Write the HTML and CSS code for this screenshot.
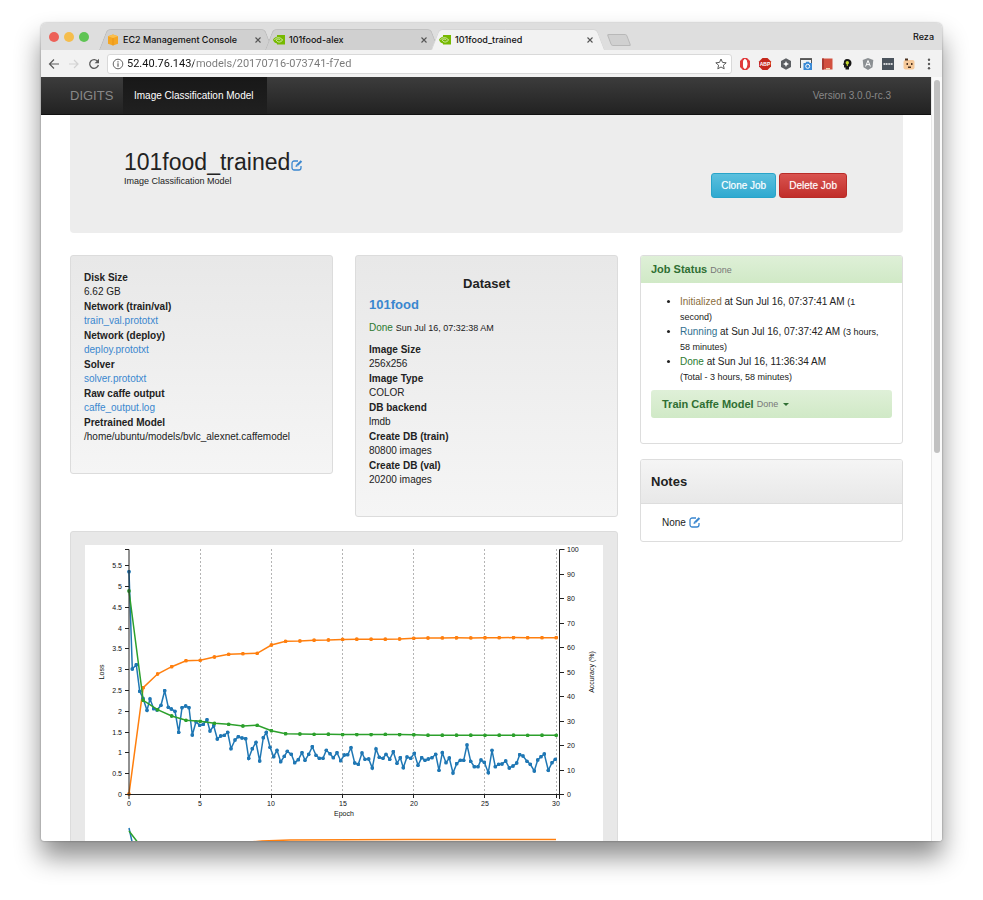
FILE: index.html
```html
<!DOCTYPE html>
<html lang="en">
<head>
<meta charset="utf-8">
<meta name="viewport" content="width=device-width, initial-scale=1">
<title>101food_trained</title>
<link rel="stylesheet" href="styles.css">
</head>
<body>
<svg class="defs" width="0" height="0" aria-hidden="true">
  <symbol id="eye" viewBox="0 0 12 10">
    <path d="M4 0h8v9.500H4V8.500C2 8 .5 6.500 0 4.700 1 3 2.500 2 4 1.800z" fill="#76b900"/>
    <path d="M1.500 4.800C3.500 2 7.500 2 9.600 5 8 7.300 5 8 3.200 5.200 4.600 3.600 6.500 4 7.300 5.200" fill="none" stroke="#e6f2cf" stroke-width=".8"/>
  </symbol>
  <symbol id="edit" viewBox="0 0 12 12">
    <path d="M7 2H3.200A2.200 2.200 0 0 0 1 4.200v4.600A2.200 2.200 0 0 0 3.200 11h4.600A2.200 2.200 0 0 0 10 8.800V7" fill="none" stroke="currentColor" stroke-width="1.300"/>
    <path d="M4.500 8l.4-2L9.700 1.200l1.500 1.500-4.800 4.800z" fill="currentColor"/>
    <path d="M5.700 6l.9.9" stroke="#fff" stroke-width=".7"/>
  </symbol>
  <symbol id="close" viewBox="0 0 8 8"><path d="M1.500 1.500l5 5M6.500 1.500l-5 5" stroke="#555" stroke-width="1.100"/></symbol>
</svg>

<div class="window">
  <header class="tabstrip">
    <div class="lights"><i class="close-light"></i><i class="minimize-light"></i><i class="zoom-light"></i></div>
    <nav class="tabs">
      <div class="tab">
        <svg class="favicon" viewBox="0 0 12 12"><path d="M6 .5l5 1.800v7.400L6 11.500 1 9.700V2.300z" fill="#f5a623"/><path d="M6 .5l5 1.800L6 4 1 2.300z" fill="#fbbf4c"/><path d="M6 4v7.500" stroke="#e08b12" stroke-width=".6"/></svg>
        <a href="#">EC2 Management Console</a>
        <button type="button" aria-label="Close tab"><svg><use href="#close"/></svg></button>
      </div>
      <div class="tab">
        <svg class="favicon"><use href="#eye"/></svg>
        <a href="#">101food-alex</a>
        <button type="button" aria-label="Close tab"><svg><use href="#close"/></svg></button>
      </div>
      <div class="tab active">
        <svg class="favicon"><use href="#eye"/></svg>
        <a href="#">101food_trained</a>
        <button type="button" aria-label="Close tab"><svg><use href="#close"/></svg></button>
      </div>
      <button type="button" class="newtab" aria-label="New tab"></button>
    </nav>
    <span class="profile">Reza</span>
  </header>

  <div class="toolbar">
    <div class="history">
      <button type="button" aria-label="Back"><svg viewBox="0 0 12 12"><path d="M11 6H1.500M6 1.500L1.500 6 6 10.500" fill="none" stroke="#5a5a5a" stroke-width="1.200"/></svg></button>
      <button type="button" aria-label="Forward"><svg viewBox="0 0 12 12"><path d="M1 6h9M6 2l4 4-4 4" fill="none" stroke="#d2d2d2" stroke-width="1.200"/></svg></button>
      <button type="button" aria-label="Reload"><svg viewBox="0 0 12 12"><path d="M9.800 3.500A4.400 4.400 0 1 0 10.400 7" fill="none" stroke="#5a5a5a" stroke-width="1.300"/><path d="M11 .8v4.400H6.600z" fill="#5a5a5a"/></svg></button>
    </div>
    <div class="omnibox">
      <svg viewBox="0 0 12 12"><circle cx="6" cy="6" r="4.800" fill="none" stroke="#666" stroke-width="1"/><path d="M6 5.300v3.400M6 3.200v1.200" stroke="#666" stroke-width="1.200"/></svg>
      <input type="text" aria-label="Address" value="52.40.76.143/models/20170716-073741-f7ed">
      <svg viewBox="0 0 12 12"><path d="M6 1l1.500 3.400 3.700.4-2.800 2.400.8 3.600L6 9l-3.200 1.800.8-3.600L.8 4.800l3.700-.4z" fill="none" stroke="#5a5a5a" stroke-width="1"/></svg>
    </div>
    <div class="extensions">
      <svg viewBox="0 0 14 14"><path fill-rule="evenodd" d="M5 1h4l3 3v6l-3 3H5l-3-3V4zM7 2.300C5.400 2.300 5 5 5 7s.4 4.700 2 4.700S9.300 9 9.300 7 8.600 2.300 7 2.300z" fill="#e03a3c"/><path d="M7 2.300C5.400 2.300 5 5 5 7s.4 4.700 2 4.700S9.300 9 9.300 7 8.600 2.300 7 2.300z" fill="#fff"/></svg>
      <svg viewBox="0 0 14 14"><path d="M4.500 1h5L13 4.500v5L9.500 13h-5L1 9.500v-5z" fill="#c5281c"/><text x="7" y="9" class="abp">ABP</text></svg>
      <svg viewBox="0 0 14 14"><path d="M7 1.200l5 2.900v5.800l-5 2.900-5-2.900V4.100z" fill="#5c5f63"/><path d="M7 4l.9 2.100L10 7l-2.100.9L7 10l-.9-2.100L4 7l2.100-.9z" fill="#fff"/></svg>
      <svg viewBox="0 0 14 14"><path d="M1.500 11V1.800h11V6" fill="none" stroke="#555" stroke-width="1"/><path d="M1 1.300h12v1.700H1z" fill="#555"/><path d="M4.500 6h2l.8-1.200h2.600l.8 1.200H13v7H4.500z" fill="#3a8ad6"/><circle cx="8.700" cy="9.300" r="2" fill="none" stroke="#fff"/></svg>
      <svg viewBox="0 0 14 14"><path d="M2 1.500h10.500v11H2z" fill="#d2503f"/><path d="M2 1.500h2v11H2z" fill="#a83a30"/><path d="M6 11h4v1.500H6z" fill="#efd9b4"/></svg>
      <svg viewBox="0 0 14 14"><path d="M7 2c3 0 4.500 1.800 4.500 4S10 9.500 9 10v2.500H5.500V10.500H4V8L3 7.500 3.800 6C3.800 3.600 5 2 7 2z" fill="#161616"/><circle cx="7.300" cy="5.700" r="1.700" fill="#c6d92f"/><path d="M7.300 7v2" stroke="#c6d92f"/></svg>
      <svg viewBox="0 0 14 14"><path d="M7 1l5.300 1.900-.8 7.300L7 13l-4.500-2.800-.8-7.300z" fill="#8b8f92"/><path d="M4.600 9.500L7 3.500l2.400 6M5.500 7.600h3" fill="none" stroke="#fff" stroke-width="1"/></svg>
      <svg viewBox="0 0 14 14"><path d="M1 1h12v12H1z" fill="#4a535c"/><path d="M2.500 6.200h2v1.600h-2zM5 6.200h1.600v1.600H5zM7.300 6.200h1.600v1.600H7.300zM9.600 6.200h2v1.600h-2z" fill="#fff"/></svg>
      <svg viewBox="0 0 14 14"><rect x="1.500" y="3" width="11" height="9.500" rx="2" fill="#f5c99a"/><path d="M3 1.500h3v2H3zM4.500 6H6v2H4.500zM9 6h1.500v2H9zM6 9.500h3V11H6z" fill="#4c3320"/></svg>
      <svg viewBox="0 0 14 14"><circle cx="7" cy="2.700" r="1.200" fill="#5a5a5a"/><circle cx="7" cy="7" r="1.200" fill="#5a5a5a"/><circle cx="7" cy="11.300" r="1.200" fill="#5a5a5a"/></svg>
    </div>
  </div>

  <div class="viewport">
    <div class="page">
      <nav class="navbar">
        <a class="brand" href="#">DIGITS</a>
        <a class="current" href="#">Image Classification Model</a>
        <span class="version">Version 3.0.0-rc.3</span>
      </nav>

      <main class="container">
        <section class="jumbotron">
          <div>
            <h1>101food_trained<a href="#" aria-label="Edit name"><svg class="edit"><use href="#edit"/></svg></a></h1>
            <small>Image Classification Model</small>
          </div>
          <div class="actions">
            <button type="button" class="clone">Clone Job</button>
            <button type="button" class="delete">Delete Job</button>
          </div>
        </section>

        <div class="columns">
          <div class="primary">
            <section class="well">
              <dl>
                <dt>Disk Size</dt><dd>6.62 GB</dd>
                <dt>Network (train/val)</dt><dd><a href="#">train_val.prototxt</a></dd>
                <dt>Network (deploy)</dt><dd><a href="#">deploy.prototxt</a></dd>
                <dt>Solver</dt><dd><a href="#">solver.prototxt</a></dd>
                <dt>Raw caffe output</dt><dd><a href="#">caffe_output.log</a></dd>
                <dt>Pretrained Model</dt><dd>/home/ubuntu/models/bvlc_alexnet.caffemodel</dd>
              </dl>
            </section>
            <section class="well">
              <h2>Dataset</h2>
              <h3><a href="#">101food</a></h3>
              <p><span class="done">Done</span> <small>Sun Jul 16, 07:32:38 AM</small></p>
              <dl>
                <dt>Image Size</dt><dd>256x256</dd>
                <dt>Image Type</dt><dd>COLOR</dd>
                <dt>DB backend</dt><dd>lmdb</dd>
                <dt>Create DB (train)</dt><dd>80800 images</dd>
                <dt>Create DB (val)</dt><dd>20200 images</dd>
              </dl>
            </section>

            <section class="well chart">
              <svg viewBox="85 545 518 420" role="img" aria-label="Loss and accuracy by epoch">
                <defs>
                  <marker id="dot-blue" markerUnits="userSpaceOnUse" markerWidth="4" markerHeight="4" refX="2" refY="2"><circle cx="2" cy="2" r="1.900" fill="#1f77b4"/></marker>
                  <marker id="dot-orange" markerUnits="userSpaceOnUse" markerWidth="4" markerHeight="4" refX="2" refY="2"><circle cx="2" cy="2" r="1.900" fill="#ff7f0e"/></marker>
                  <marker id="dot-green" markerUnits="userSpaceOnUse" markerWidth="4" markerHeight="4" refX="2" refY="2"><circle cx="2" cy="2" r="1.900" fill="#2ca02c"/></marker>
                </defs>
                <path class="gridline" d="M200.500 549V794M271.500 549V794M342.500 549V794M413.500 549V794M484.500 549V794M556.500 549V794"/>
                <polyline class="line orange" points="129,794 143.200,687.700 157.500,674 171.700,666.700 186,660.700 200.200,660.300 214.400,657 228.700,654.300 242.900,653.700 257.200,653.300 271.400,645 285.600,641.300 299.900,641 314.100,640.200 328.400,640 342.600,639.400 356.800,639.200 371.100,639.200 385.300,639.200 399.600,639 413.800,638.300 428,638 442.300,637.900 456.500,637.800 470.800,637.900 485,637.800 499.200,637.700 513.500,637.600 527.700,637.700 542,637.700 556.200,637.700"/>
                <polyline class="line blue" points="129,571.700 132.300,669 136.300,664.700 139.700,691.300 143,698.300 147,710.300 150,699 153.700,708.700 157,710 161,705.300 164.700,690.700 168.300,707.300 171.300,709 175,711.300 178.700,732.300 182,707.700 185.700,706 189,707.700 192.300,735 196,721.700 199.700,725.300 203.300,724.300 207,719.700 210,731 213.700,725.700 217.300,739 220.700,736 224.300,735.300 227.700,732.300 231,748.700 235,740 238.300,736.700 242,738 245.700,738.700 248.700,758.300 252.300,748.700 256,742.300 259.700,761 263.300,737.700 266.300,732.300 270,747.300 273.700,756.700 277,750.300 280.700,761.700 284.300,756.300 287.300,751.300 291.300,754.300 294.700,762.700 298.300,759.700 302,752.700 305,760.300 308.700,754.300 312.300,746.700 316,755.300 319.300,758.300 323,758.300 326.300,750.300 330,753.700 333.300,757.700 337,752.700 340.700,760.700 344.300,755 347.700,754.700 351,747.700 354.700,763 358.300,764.300 362,753 365,759.300 368.700,759 372.300,768 376,749 379.300,757.300 383,758.300 386,754.300 389.700,759.300 393.300,751.700 397,763.300 400.300,757.700 403.300,767.700 407,757 410.700,758.300 414.300,753.300 418,765.300 421.700,757.700 425,760.300 428.300,759 432,757.700 435.700,754.300 439,770.300 442.300,752.700 446,762.700 449.300,758 453,773 456.700,763.700 460.300,760.300 463.700,760.300 467,745 470.700,761.300 474.300,766.700 478,766.700 481,760 484.300,762.300 488.300,772.700 492,750.300 495.300,766.700 498.700,764.300 502,764 505.700,761 509.300,768 513,766 516.700,763 519.700,754.700 523,756 527,761.300 530.300,764.300 534.300,771 537.700,760 541,756.700 544.300,754 548.300,770.300 552,762.700 555.300,759.300"/>
                <polyline class="line green" points="129,591 143.200,700.300 157.500,709.700 171.700,716 186,720.300 200.200,721.300 214.400,723.300 228.700,724.300 242.900,726 257.200,725.300 271.400,730.700 285.600,733.700 299.900,734 314.100,734.300 328.400,734.200 342.600,734.600 356.800,734.600 371.100,734.600 385.300,734.400 399.600,734.500 413.800,734.800 428,735.200 442.300,735.200 456.500,735.200 470.800,735.200 485,735.300 499.200,735.200 513.500,735.200 527.700,735.300 542,735.200 556.200,735.300"/>
                <path class="axis" d="M125 549.500h4V794.500M125 565.500h4M125 586.500h4M125 607.500h4M125 628.500h4M125 648.500h4M125 669.500h4M125 690.500h4M125 711.500h4M125 732.500h4M125 752.500h4M125 773.500h4M125 794.500h439M129 794v5M200.500 794v4M271.500 794v4M342.500 794v4M413.500 794v4M484.500 794v4M556.500 794v4M559.500 799V549.500h5M560 574.500h4M560 598.500h4M560 623.500h4M560 647.500h4M560 672.500h4M560 696.500h4M560 721.500h4M560 745.500h4M560 770.500h4"/>
                <g class="ticks left">
                  <text x="122" y="568">5.5</text><text x="122" y="589">5</text><text x="122" y="610">4.5</text><text x="122" y="631">4</text><text x="122" y="651">3.5</text><text x="122" y="672">3</text><text x="122" y="693">2.5</text><text x="122" y="714">2</text><text x="122" y="735">1.5</text><text x="122" y="755">1</text><text x="122" y="776">0.5</text><text x="122" y="797">0</text>
                </g>
                <g class="ticks right">
                  <text x="567" y="552">100</text><text x="567" y="577">90</text><text x="567" y="601">80</text><text x="567" y="626">70</text><text x="567" y="650">60</text><text x="567" y="675">50</text><text x="567" y="699">40</text><text x="567" y="724">30</text><text x="567" y="748">20</text><text x="567" y="773">10</text><text x="567" y="797">0</text>
                </g>
                <g class="ticks bottom">
                  <text x="129" y="806">0</text><text x="200" y="806">5</text><text x="271" y="806">10</text><text x="343" y="806">15</text><text x="414" y="806">20</text><text x="485" y="806">25</text><text x="556" y="806">30</text><text x="344" y="816">Epoch</text>
                  <text transform="translate(104 672) rotate(-90)">Loss</text>
                  <text transform="translate(594 672) rotate(-90)">Accuracy (%)</text>
                </g>
                <polyline class="plain orange" points="129,890 143,853 200,846 262,841 290,840 414,839.500 556,839.500"/>
                <polyline class="plain blue" points="129,828 133,846 143,858"/>
                <polyline class="plain green" points="129,831 139,844 160,860"/>
              </svg>
            </section>
          </div>

          <aside class="secondary">
            <section class="panel status">
              <header><h2>Job Status <small>Done</small></h2></header>
              <div class="body">
                <ul>
                  <li><span class="initialized">Initialized</span> at Sun Jul 16, 07:37:41 AM <small>(1</small> <small>second)</small></li>
                  <li><span class="running">Running</span> at Sun Jul 16, 07:37:42 AM <small>(3 hours,</small> <small>58 minutes)</small></li>
                  <li><span class="done">Done</span> at Sun Jul 16, 11:36:34 AM<br><small>(Total - 3 hours, 58 minutes)</small></li>
                </ul>
                <button type="button" class="task">Train Caffe Model <small>Done</small><i class="caret"></i></button>
              </div>
            </section>
            <section class="panel notes">
              <header><h2>Notes</h2></header>
              <p>None <a href="#" aria-label="Edit notes"><svg class="edit"><use href="#edit"/></svg></a></p>
            </section>
          </aside>
        </div>
      </main>
    </div>
    <div class="scrollbar"><div class="thumb"></div></div>
  </div>
</div>
</body>
</html>
```
FILE: styles.css
```css
* { box-sizing: border-box; }

body {
  margin: 0;
  height: 100vh;
  padding: 23px 41px 59px;
  background: #fff;
  color: #222;
  font: 10px/15px "Liberation Sans", Arial, sans-serif;
  overflow: hidden;
}

a { color: #3a87cf; text-decoration: none; }
button { font: inherit; border: 0; padding: 0; background: none; }
h1, h2, h3, p, ul, dl, dd { margin: 0; }
small { font-size: 9px; line-height: 10px; }
.defs { position: absolute; }

.window {
  display: flex;
  flex-direction: column;
  height: 100%;
  border-radius: 5px 5px 3px 3px;
  background: #fff;
  box-shadow: 0 0 2px rgba(0, 0, 0, .4), 0 16px 26px rgba(0, 0, 0, .45);
  overflow: hidden;
}

/* Browser chrome */
.tabstrip {
  display: flex;
  align-items: flex-end;
  flex: none;
  height: 27px;
  padding: 0 8px;
  background: #dedede;
  font-family: Inter, Roboto, sans-serif;
  font-size: 9px;
}
.lights { display: flex; gap: 5px; padding: 0 14px 8px 0; }
.lights i { width: 10px; height: 10px; border-radius: 50%; }
.close-light { background: #ed6158; }
.minimize-light { background: #f5bd4c; }
.zoom-light { background: #5fc454; }

.tabs { display: flex; flex: 1; min-width: 0; align-items: flex-end; }
.tab {
  position: relative;
  z-index: 0;
  display: flex;
  align-items: center;
  width: 166px;
  height: 21px;
  padding: 0 7px 0 4px;
}
.tab::before, .tab::after {
  content: "";
  position: absolute;
  z-index: -1;
  top: 0;
  bottom: 0;
  width: 55%;
  background: #d0d0d0;
  border-top: 1px solid #c2c2c2;
}
.tab::before { left: 0; transform: skewX(-21deg); border-left: 1px solid #bcbcbc; border-top-left-radius: 4px; }
.tab::after { right: 0; transform: skewX(21deg); border-right: 1px solid #bcbcbc; border-top-right-radius: 4px; }
.tab.active { z-index: 1; }
.tab.active::before, .tab.active::after { background: #f2f2f2; border-color: #d6d6d6; }
.tab a { flex: 1; padding-left: 4px; color: #111; font-weight: 500; white-space: nowrap; }
.favicon { width: 12px; height: 12px; }
.tab button, .tab button svg { display: block; width: 8px; height: 8px; }
.newtab {
  width: 20px;
  height: 12px;
  margin: 0 0 4px 8px;
  border: 1px solid #b8b8b8;
  border-radius: 2px;
  background: #d0d0d0;
  transform: skewX(21deg);
}
.profile { align-self: center; color: #111; font-weight: 500; }

.toolbar {
  display: flex;
  align-items: center;
  flex: none;
  height: 27px;
  padding: 0 6px 0 7px;
  background: #f2f2f2;
}
.history { display: flex; gap: 8px; padding-right: 7px; }
.history button, .history svg { display: block; width: 12px; height: 12px; }
.omnibox {
  display: flex;
  align-items: center;
  flex: 1;
  gap: 3px;
  height: 20px;
  padding: 0 4px;
  border: 1px solid #d9d9d9;
  border-radius: 3px;
  background: #fff;
}
.omnibox svg { flex: none; width: 12px; height: 12px; }
.omnibox input {
  flex: 1;
  min-width: 0;
  border: 0;
  padding: 0;
  outline: 0;
  font: 11px/16px Roboto, sans-serif;
  background: linear-gradient(90deg, #111 67px, #777 67px);
  background-clip: text;
  -webkit-background-clip: text;
  -webkit-text-fill-color: transparent;
}
.extensions { display: flex; justify-content: space-between; width: 198px; margin-left: 6px; }
.extensions svg { width: 14px; height: 14px; }
.abp { font: bold 5px "Liberation Sans", sans-serif; fill: #fff; text-anchor: middle; }

/* Page */
.viewport { display: flex; flex: 1; min-height: 0; }
.page { flex: 1; min-width: 0; overflow: hidden; }
.scrollbar { flex: none; width: 11px; padding: 3px 2px 0 2px; border-left: 1px solid #e8e8e8; background: #fafafa; }
.thumb { height: 49%; border-radius: 3px; background: #c1c1c1; }

.navbar {
  display: flex;
  align-items: center;
  height: 38px;
  padding: 0 40px 0 29px;
  background: linear-gradient(#3c3c3c, #222);
  border-bottom: 1px solid #111;
}
.navbar .brand { width: 53px; color: #888; font-size: 13px; }
.navbar .current {
  align-self: stretch;
  padding: 0 13px 0 11px;
  background: linear-gradient(#181818, #202020);
  color: #fff;
  line-height: 37px;
}
.version { margin-left: auto; color: #888; }

.container { padding: 0 28px 0 29px; }
.jumbotron {
  display: flex;
  justify-content: space-between;
  align-items: center;
  height: 118px;
  padding: 0 56px 12px 54px;
  border-radius: 0 0 4px 4px;
  background: #ededed;
}
.jumbotron h1 { font-size: 23px; font-weight: 400; line-height: 26px; }
.jumbotron small { display: block; line-height: 12px; }
.edit { width: 12px; height: 12px; vertical-align: -2px; }
h1 .edit { margin-left: 1px; vertical-align: -1px; }
.actions { display: flex; gap: 3px; padding-top: 34px; }
.actions button {
  height: 25px;
  padding: 0 9px;
  border: 1px solid;
  border-radius: 3px;
  color: #fff;
  text-shadow: 0 0 1px rgba(255, 255, 255, .5);
}
.actions .clone { background: linear-gradient(#5bc0de, #2fa9d0); border-color: #28a4c9; }
.actions .delete { background: linear-gradient(#d9534f, #c12e2a); border-color: #b92c28; }

.columns { display: grid; grid-template-columns: repeat(3, 1fr); gap: 22px; align-items: start; padding-top: 22px; }
.primary { grid-column: span 2; display: grid; grid-template-columns: 1fr 1fr; gap: 14px 22px; align-items: start; }
.secondary { display: grid; gap: 15px; }

.well {
  padding: 14px 13px 29px;
  border: 1px solid #dcdcdc;
  border-radius: 3px;
  background: linear-gradient(#e8e8e8, #f5f5f5);
}
.well dt { font-weight: 700; line-height: 15px; }
.well dd { line-height: 14px; }
.well h2 { padding-top: 4px; font-size: 13px; line-height: 20px; text-align: center; }
.well h3 { font-size: 13px; line-height: 22px; }
.well p { padding: 4px 0 7px; }
.done { color: #2b7a2f; }
.initialized { color: #8a6d3b; }
.running { color: #31708f; }

.chart { grid-column: span 2; padding: 13px 14px; background: #e8e8e8; }
.chart svg { display: block; width: 100%; background: #fff; }
.gridline { fill: none; stroke: #b4b4b4; stroke-width: 1; stroke-dasharray: 2 2; }
.axis { fill: none; stroke: #222; stroke-width: 1; }
.line, .plain { fill: none; stroke-width: 1.5; }
.blue { stroke: #1f77b4; }
.orange { stroke: #ff7f0e; }
.green { stroke: #2ca02c; }
.line.blue { marker: url(#dot-blue); }
.line.orange { marker: url(#dot-orange); }
.line.green { marker: url(#dot-green); }
.ticks { font-size: 7px; fill: #111; }
.left { text-anchor: end; }
.bottom { text-anchor: middle; }

.panel { border: 1px solid #ddd; border-radius: 3px; background: #fff; overflow: hidden; }
.panel header { padding: 0 10px; }
.status header { margin: -1px -1px 0; padding: 0 11px; background: linear-gradient(#dff0d8, #d0e9c6); }
.status h2, .task { color: #2f6f33; font-size: 11px; font-weight: 700; line-height: 28px; }
.status h2 small, .task small { color: #777; font-weight: 400; }
.status .body { padding: 11px 10px 25px; }
.status ul { padding: 0 8px 0 29px; }
.task {
  display: flex;
  align-items: center;
  gap: 3px;
  width: 100%;
  height: 28px;
  margin-top: 6px;
  padding: 0 11px;
  border-radius: 3px;
  background: linear-gradient(#dff0d8, #d0e9c6);
}
.caret { margin-left: 2px; border: 3px solid transparent; border-top-color: #2f6f33; border-bottom: 0; }
.notes header { background: linear-gradient(#f5f5f5, #e8e8e8); border-bottom: 1px solid #ddd; }
.notes h2 { font-size: 13px; line-height: 43px; }
.notes p { padding: 11px 21px; }
```
